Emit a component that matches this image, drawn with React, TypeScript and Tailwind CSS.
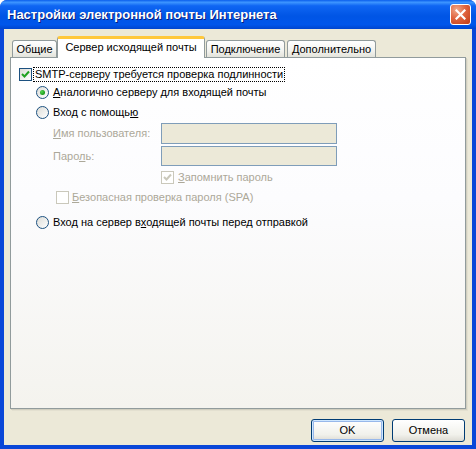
import React from "react";

// XP-style mail account settings dialog, "outgoing server" tab

type BoxProps = { checked?: boolean; disabled?: boolean };

function CheckBox({ checked, disabled }: BoxProps) {
  return (
    <span
      className={
        "inline-flex h-[13px] w-[13px] shrink-0 items-center justify-center border " +
        (disabled
          ? "border-[#CAC8BB] bg-white"
          : "border-[#1C5180] bg-[linear-gradient(135deg,#DCDCD7,#FFFFFF)]")
      }
    >
      {checked && (
        <svg width="9" height="9" viewBox="0 0 9 9">
          <polyline
            points="1,4 3.5,6.5 8,1.5"
            fill="none"
            stroke={disabled ? "#CAC8BB" : "#21A121"}
            strokeWidth="2"
          />
        </svg>
      )}
    </span>
  );
}

function Radio({ checked }: BoxProps) {
  return (
    <span className="inline-flex h-[13px] w-[13px] shrink-0 items-center justify-center rounded-full border border-[#1C5180] bg-[linear-gradient(135deg,#DCDCD7,#FFFFFF)]">
      {checked && (
        <span className="h-[5px] w-[5px] rounded-full bg-[radial-gradient(circle_at_35%_35%,#55D551,#21A121_60%,#1A8F1A)]" />
      )}
    </span>
  );
}

function Tab({ label, width, active }: { label: string; width: string; active?: boolean }) {
  if (active) {
    return (
      <div
        className={
          width +
          " relative z-10 -mb-px flex h-[22px] items-start justify-center rounded-t-[3px] border-x border-t-[3px] border-x-[#919B9C] border-t-[#FFC83C] bg-white pt-[2px]"
        }
      >
        {label}
      </div>
    );
  }
  return (
    <div
      className={
        width +
        " flex h-[17px] items-center justify-center rounded-t-[3px] border-x border-t border-[#919B9C] bg-[linear-gradient(#FFFFFF,#F3F3EF_60%,#E3E3DB)]"
      }
    >
      {label}
    </div>
  );
}

function Button({ children, primary }: { children: React.ReactNode; primary?: boolean }) {
  return (
    <button
      className={
        "flex h-[23px] w-[73px] items-center justify-center rounded-[3px] border border-[#003C74] bg-[linear-gradient(#FFFFFF,#F1F1EB_70%,#DCDBD3)] text-black " +
        (primary ? "shadow-[inset_0_0_0_1px_#CEE7FF,inset_0_0_0_2px_#98B8EA]" : "")
      }
    >
      {children}
    </button>
  );
}

export default function App() {
  return (
    <div className="flex h-[449px] w-[476px] flex-col overflow-hidden rounded-t-[7px] bg-[#0A47D8] font-['Liberation_Sans',Arial,sans-serif] text-[11px] leading-[13px] text-black">
      {/* title bar */}
      <div className="flex h-[29px] shrink-0 items-center justify-between bg-[linear-gradient(#0A5EEC,#3D95FF_8%,#0F66F3_20%,#0055E5_55%,#0056EB_85%,#0045CE)] pl-[7px] pr-[5px]">
        <span className="font-['Liberation_Sans',Arial,sans-serif] text-[13px] font-bold text-white [text-shadow:1px_1px_0_#0A1E7A]">
          Настройки электронной почты Интернета
        </span>
        <span className="flex h-[21px] w-[21px] items-center justify-center rounded-[3px] border border-white bg-[radial-gradient(circle_at_30%_25%,#F0A98C,#E06540_45%,#C23A14)]">
          <svg width="11" height="11" viewBox="0 0 11 11">
            <path d="M1.5 1.5 L9.5 9.5 M9.5 1.5 L1.5 9.5" stroke="white" strokeWidth="2.2" strokeLinecap="square" />
          </svg>
        </span>
      </div>

      {/* client area */}
      <div className="mx-[4px] mb-[4px] flex flex-1 flex-col bg-[#ECE9D8] px-[6px] pt-[7px]">
        <div className="flex items-end pl-[2px]">
          <Tab label="Общие" width="w-[45px]" />
          <Tab label="Сервер исходящей почты" width="w-[148px]" active />
          <div className="w-px" />
          <Tab label="Подключение" width="w-[79px]" />
          <div className="w-[2px]" />
          <Tab label="Дополнительно" width="w-[89px]" />
        </div>

        <div className="h-[352px] border border-[#919B9C] bg-[linear-gradient(#FFFFFF,#FCFCFE_40%,#F4F3EE)] pl-[8px] pt-[10px] shadow-[1px_1px_0_#D0CEBF,2px_2px_0_#E3E0D0]">
          <div className="flex items-center gap-[1px]">
            <CheckBox checked />
            <span className="ml-[1px] px-[1px] outline-1 outline-dotted outline-black">
              SMTP-серверу требуется проверка подлинности
            </span>
          </div>

          <div className="mt-[5px] flex items-center gap-[4px] pl-[17px]">
            <Radio checked />
            <span>
              <u>А</u>налогично серверу для входящей почты
            </span>
          </div>

          <div className="mt-[7px] flex items-center gap-[4px] pl-[17px]">
            <Radio />
            <span>
              Вход с помощь<u>ю</u>
            </span>
          </div>

          <div className="mt-[4px] flex items-center pl-[34px] text-[#ACA899]">
            <span className="w-[108px]">
              <u>И</u>мя пользователя:
            </span>
            <div className="h-[21px] w-[176px] border border-[#7F9DB9] bg-[#ECE9D8]" />
          </div>

          <div className="mt-[2px] flex items-center pl-[34px] text-[#ACA899]">
            <span className="w-[108px]">
              Паро<u>л</u>ь:
            </span>
            <div className="h-[20px] w-[176px] border border-[#7F9DB9] bg-[#ECE9D8]" />
          </div>

          <div className="mt-[5px] flex items-center gap-[4px] pl-[142px] text-[#ACA899]">
            <CheckBox checked disabled />
            <span>
              <u>З</u>апомнить пароль
            </span>
          </div>

          <div className="mt-[7px] flex items-center gap-[3px] pl-[37px] text-[#ACA899]">
            <CheckBox disabled />
            <span>
              <u>Б</u>езопасная проверка пароля (SPA)
            </span>
          </div>

          <div className="mt-[12px] flex items-center gap-[4px] pl-[17px]">
            <Radio />
            <span>
              Вход на сервер в<u>х</u>одящей почты перед отправкой
            </span>
          </div>
        </div>

        <div className="mt-[10px] flex justify-end gap-[8px] pr-[1px]">
          <Button primary>OK</Button>
          <Button>Отмена</Button>
        </div>
      </div>
    </div>
  );
}
